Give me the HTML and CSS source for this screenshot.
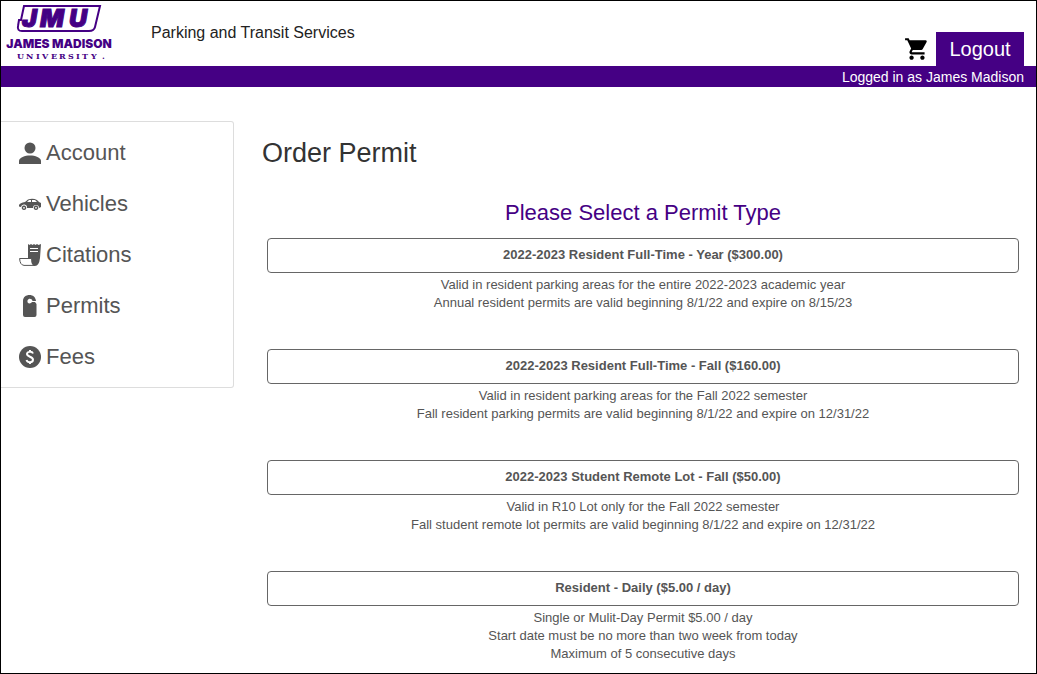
FILE: index.html
```html
<!DOCTYPE html>
<html lang="en">
<head>
<meta charset="utf-8">
<title>Order Permit</title>
<link rel="stylesheet" href="styles.css">
</head>
<body>
<header class="header">
  <a class="logo" href="#" aria-label="James Madison University">
    <svg width="116" height="64" viewBox="0 0 116 64">
      <path class="logo-frame" d="M24 6H100L95 27Q94 31 89 31H22Q17 31 18 26L19 20H21Z"/>
      <g class="logo-jmu"><text x="22" y="27">J</text><text x="40" y="27">M</text><text x="69" y="27">U</text></g>
      <text class="logo-name" x="59" y="48">JAMES MADISON</text>
      <g class="logo-univ"><text x="17" y="59">U</text><text x="26" y="59">N</text><text x="36" y="59">I</text><text x="42" y="59">V</text><text x="51" y="59">E</text><text x="59" y="59">R</text><text x="68" y="59">S</text><text x="76" y="59">I</text><text x="82" y="59">T</text><text x="91" y="59">Y</text><text x="102" y="59">.</text></g>
    </svg>
  </a>
  <p class="site-name">Parking and Transit Services</p>
  <div class="actions">
    <a class="cart" href="#" aria-label="Cart">
      <svg width="26" height="26" viewBox="0 0 24 24"><path d="M7 18c-1.100 0-1.990.9-1.990 2S5.900 22 7 22s2-.9 2-2-.9-2-2-2zM1 2v2h2l3.600 7.590-1.350 2.450c-.16.280-.25.610-.25.960 0 1.100.9 2 2 2h12v-2H7.420c-.14 0-.25-.11-.25-.25l.03-.12.900-1.630h7.450c.750 0 1.410-.41 1.750-1.030l3.580-6.490A1 1 0 0 0 20 4H5.210l-.94-2H1zm16 16c-1.100 0-1.990.9-1.990 2s.89 2 1.990 2 2-.9 2-2-.9-2-2-2z"/></svg>
    </a>
    <button class="logout" type="button">Logout</button>
  </div>
</header>
<div class="user-bar">Logged in as James Madison</div>
<div class="layout">
  <nav class="menu">
    <a class="menu-item" href="#"><svg class="icon" viewBox="0 0 22 22"><circle cx="11" cy="6" r="5.500"/><path d="M0 22V19C0 15.500 6 13.500 11 13.500S22 15.500 22 19V22Z"/></svg>Account</a>
    <a class="menu-item" href="#"><svg class="icon" viewBox="0 0 22 22"><path fill-rule="evenodd" d="M0 12Q1 10 6 9L9 6.500Q14 5 18 7L20 9L22 10V14L20 15A3 3 0 0 0 14 15H8A3 3 0 0 0 2 14L0 13.500ZM8 9H12V7H10ZM13 7V9H18L16 7Z"/><path fill-rule="evenodd" d="M5 12.500a2.300 2.300 0 1 0 .01 0ZM5 14a.8.800 0 1 1-.01 0ZM17 12.500a2.300 2.300 0 1 0 .01 0ZM17 14a.8.800 0 1 1-.01 0Z"/></svg>Vehicles</a>
    <a class="menu-item" href="#"><svg class="icon" viewBox="0 0 22 22"><path d="M9 0L10.500 1L12 0L13.500 1L15 0L16.500 1L18 0L19.500 1L22 0L21 14Q20 22 16 22Q12 22 12 14H9Z"/><path class="icon-line" d="M11 4.500H19M11 7.500H19"/><path class="icon-outline" d="M12 14.500H.6Q1 21 5 21.400H16"/></svg>Citations</a>
    <a class="menu-item" href="#"><svg class="icon" viewBox="0 0 22 22"><path d="M4 6C4 2 7 0 10.500 0C14 0 16.500 2 17 6H13.500C13 3.500 9.500 3 8.500 5.500C8 8 10 9 12 8L13 7H16L17.500 9V20Q17.500 22 15.500 22H6Q4 22 4 20Z"/></svg>Permits</a>
    <a class="menu-item" href="#"><svg class="icon" viewBox="0 0 22 22"><circle cx="11" cy="11" r="11"/><path class="dollar" d="M14 7.500C13 5 8 5.500 8 8C8 11 14 10.500 14 13.700C14 17 8.500 17 7.500 14M11 4V6M11 16V18"/></svg>Fees</a>
  </nav>
  <main class="content">
    <h1 class="title">Order Permit</h1>
    <h2 class="subtitle">Please Select a Permit Type</h2>
    <ul class="permits">
      <li><button class="permit" type="button">2022-2023 Resident Full-Time - Year ($300.00)</button>
        <p class="note">Valid in resident parking areas for the entire 2022-2023 academic year<br>Annual resident permits are valid beginning 8/1/22 and expire on 8/15/23</p></li>
      <li><button class="permit" type="button">2022-2023 Resident Full-Time - Fall ($160.00)</button>
        <p class="note">Valid in resident parking areas for the Fall 2022 semester<br>Fall resident parking permits are valid beginning 8/1/22 and expire on 12/31/22</p></li>
      <li><button class="permit" type="button">2022-2023 Student Remote Lot - Fall ($50.00)</button>
        <p class="note">Valid in R10 Lot only for the Fall 2022 semester<br>Fall student remote lot permits are valid beginning 8/1/22 and expire on 12/31/22</p></li>
      <li><button class="permit" type="button">Resident - Daily ($5.00 / day)</button>
        <p class="note">Single or Mulit-Day Permit $5.00 / day<br>Start date must be no more than two week from today<br>Maximum of 5 consecutive days</p></li>
    </ul>
  </main>
</div>
</body>
</html>
```
FILE: styles.css
```css
* { box-sizing: border-box; }
body {
  margin: 0;
  min-height: 100vh;
  border: 1px solid #000;
  background: #fff;
  color: #555;
  font-family: "Liberation Sans", Arial, sans-serif;
}
h1, h2, p, ul { margin: 0; padding: 0; font-weight: 400; }
ul { list-style: none; }
a { color: inherit; text-decoration: none; }
button { font: inherit; cursor: pointer; }
svg { display: block; }
.header { display: flex; height: 65px; padding-right: 12px; }
.logo { margin-left: -1px; margin-top: -1px; }
.logo-frame { fill: #fff; stroke: #450084; stroke-width: 2; }
.logo-jmu { fill: #450084; stroke: #450084; stroke-width: 1; font: italic 900 25px Inter, sans-serif; }
.logo-name { fill: #450084; font: 900 12px Inter, sans-serif; text-anchor: middle; }
.logo-univ { fill: #450084; font: 700 8px "DejaVu Serif", serif; }
.site-name { margin: 22px 0 0 35px; color: #222; font-size: 16px; line-height: 20px; }
.actions { display: flex; align-items: flex-end; gap: 6px; margin-left: auto; }
.cart { padding-bottom: 4px; }
.logout {
  width: 88px;
  height: 34px;
  padding: 0;
  border: 0;
  background: #450084;
  color: #fff;
  font-size: 20px;
}
.user-bar {
  padding: 1px 12px 0 0;
  background: #450084;
  color: #fff;
  font-size: 14px;
  line-height: 20px;
  text-align: right;
}
.layout { display: flex; align-items: flex-start; gap: 28px; padding: 34px 17px 0 0; }
.menu {
  flex: 0 0 233px;
  padding: 5px 0 5px 18px;
  border: 1px solid #ddd;
  border-left: 0;
  border-radius: 0 3px 3px 0;
}
.menu-item { display: flex; align-items: center; gap: 5px; font-size: 22px; line-height: 51px; }
.icon { width: 22px; height: 22px; fill: #555; }
.icon-line { stroke: #fff; }
.icon-outline { fill: none; stroke: #555; }
.dollar { fill: none; stroke: #fff; stroke-width: 2; }
.content { flex: 1; }
.title { margin-top: 16px; color: #333; font-size: 27px; line-height: 32px; }
.subtitle { margin: 30px 0 11px; padding-left: 5px; color: #450084; font-size: 22px; line-height: 28px; text-align: center; }
.permits { display: grid; gap: 37px; padding-left: 5px; text-align: center; }
.permit {
  display: block;
  width: 100%;
  height: 35px;
  margin-bottom: 3px;
  padding: 0 0 3px;
  border: 1px solid #666;
  border-radius: 4px;
  background: #fff;
  color: #555;
  font-size: 13px;
  font-weight: 700;
}
.note { font-size: 13px; line-height: 18px; }
```
